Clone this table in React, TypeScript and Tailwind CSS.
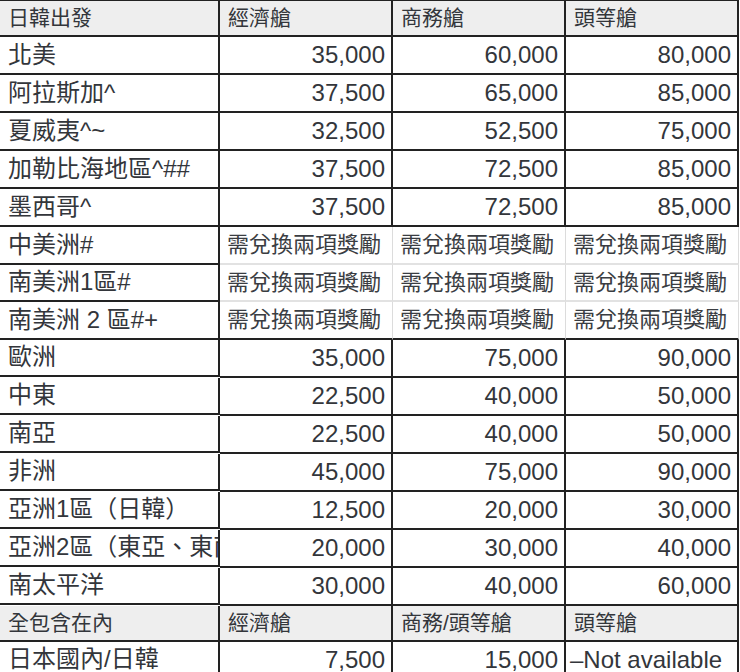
const dark = "border-[#222]";

type Row = {
  name: string;
  cells: string[];
  kind?: "head" | "pair";
  last?: boolean;
};

const rows: Row[] = [
  { name: "日韓出發", cells: ["經濟艙", "商務艙", "頭等艙"], kind: "head" },
  { name: "北美", cells: ["35,000", "60,000", "80,000"] },
  { name: "阿拉斯加^", cells: ["37,500", "65,000", "85,000"] },
  { name: "夏威夷^~", cells: ["32,500", "52,500", "75,000"] },
  { name: "加勒比海地區^##", cells: ["37,500", "72,500", "85,000"] },
  { name: "墨西哥^", cells: ["37,500", "72,500", "85,000"] },
  { name: "中美洲#", cells: ["需兌換兩項獎勵", "需兌換兩項獎勵", "需兌換兩項獎勵"], kind: "pair" },
  { name: "南美洲1區#", cells: ["需兌換兩項獎勵", "需兌換兩項獎勵", "需兌換兩項獎勵"], kind: "pair" },
  { name: "南美洲 2 區#+", cells: ["需兌換兩項獎勵", "需兌換兩項獎勵", "需兌換兩項獎勵"], kind: "pair", last: true },
  { name: "歐洲", cells: ["35,000", "75,000", "90,000"] },
  { name: "中東", cells: ["22,500", "40,000", "50,000"] },
  { name: "南亞", cells: ["22,500", "40,000", "50,000"] },
  { name: "非洲", cells: ["45,000", "75,000", "90,000"] },
  { name: "亞洲1區（日韓）", cells: ["12,500", "20,000", "30,000"] },
  { name: "亞洲2區（東亞、東南亞）", cells: ["20,000", "30,000", "40,000"] },
  { name: "南太平洋", cells: ["30,000", "40,000", "60,000"] },
  { name: "全包含在內", cells: ["經濟艙", "商務/頭等艙", "頭等艙"], kind: "head" },
  { name: "日本國內/日韓", cells: ["7,500", "15,000", "–Not available"] },
];

function Cell({ row, text, col }: { row: Row; text: string; col: number }) {
  if (row.kind === "head") {
    return (
      <div
        className={`flex items-center overflow-hidden whitespace-nowrap border-r-2 border-b-2 ${dark} bg-[#eeeeee] pl-[8px] text-[21px]`}
      >
        {text}
      </div>
    );
  }
  if (row.kind === "pair") {
    return (
      <div
        className={`flex items-center overflow-hidden whitespace-nowrap border-r border-r-[#dcdcdc] border-b-2 bg-white pl-[7px] text-[22px] text-[#3a3d42] ${
          row.last ? dark : "border-b-[#e2e2e2]"
        }`}
      >
        {text}
      </div>
    );
  }
  const numeric = /^[\d,]+$/.test(text);
  return (
    <div
      className={`flex items-center overflow-hidden whitespace-nowrap border-r-2 border-b-2 ${dark} bg-white text-[24px] ${
        numeric ? "justify-end pr-[6px]" : "pl-[4px]"
      }`}
      data-col={col}
    >
      {text}
    </div>
  );
}

export default function App() {
  return (
    <div
      className="h-[672px] w-[740px] overflow-hidden bg-white text-[#33363b]"
      style={{ fontFamily: '"Liberation Sans", "Noto Sans CJK TC", sans-serif' }}
    >
      <div className={`grid w-[739px] grid-cols-[220px_173px_173px_173px] border-t ${dark}`}>
        {rows.map((row, i) => (
          <div key={i} className={`contents`}>
            <div
              className={`flex items-center overflow-hidden whitespace-nowrap border-r-2 border-b-2 ${dark} pl-[8px] ${
                row.kind === "head"
                  ? "h-[36px] bg-[#eeeeee] text-[21px]"
                  : "h-[37.5px] bg-white text-[24px]"
              } ${i === 0 ? "h-[36px]" : ""}`}
            >
              {row.name}
            </div>
            {row.cells.map((c, j) => (
              <Cell key={j} row={row} text={c} col={j} />
            ))}
          </div>
        ))}
      </div>
    </div>
  );
}
